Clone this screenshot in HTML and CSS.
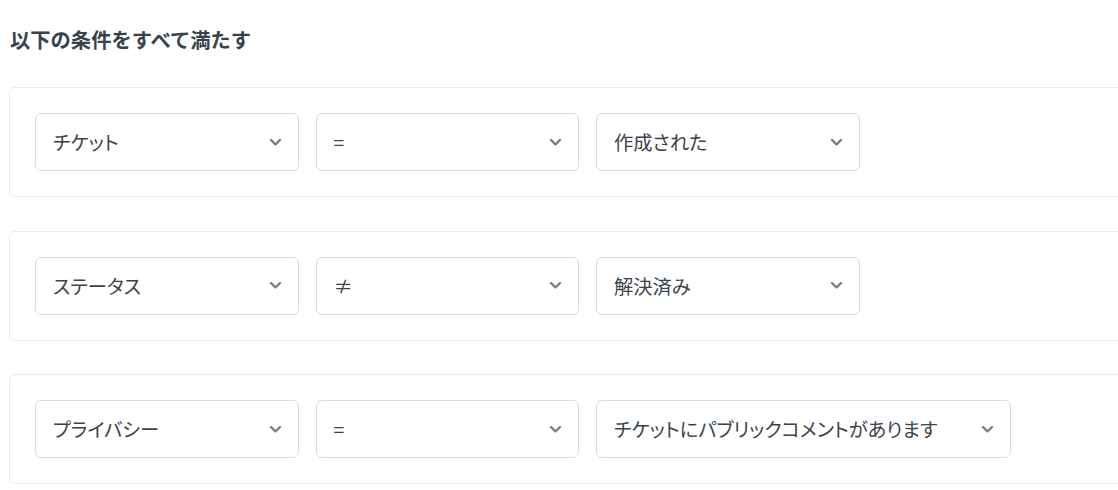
FILE: index.html
```html
<!DOCTYPE html>
<html lang="ja">
<head>
<meta charset="utf-8">
<title>条件</title>
<link rel="stylesheet" href="styles.css">
</head>
<body>
<main class="page">
  <h2 class="title">以下の条件をすべて満たす</h2>
  <section class="card">
    <div class="select"><span class="label">チケット</span><svg class="chev" viewBox="0 0 13 9"><path d="M2 2l4.5 4.5L11 2"/></svg></div>
    <div class="select"><span class="label">=</span><svg class="chev" viewBox="0 0 13 9"><path d="M2 2l4.5 4.5L11 2"/></svg></div>
    <div class="select"><span class="label">作成された</span><svg class="chev" viewBox="0 0 13 9"><path d="M2 2l4.5 4.5L11 2"/></svg></div>
  </section>
  <section class="card">
    <div class="select"><span class="label">ステータス</span><svg class="chev" viewBox="0 0 13 9"><path d="M2 2l4.5 4.5L11 2"/></svg></div>
    <div class="select"><span class="label">≠</span><svg class="chev" viewBox="0 0 13 9"><path d="M2 2l4.5 4.5L11 2"/></svg></div>
    <div class="select"><span class="label">解決済み</span><svg class="chev" viewBox="0 0 13 9"><path d="M2 2l4.5 4.5L11 2"/></svg></div>
  </section>
  <section class="card">
    <div class="select"><span class="label">プライバシー</span><svg class="chev" viewBox="0 0 13 9"><path d="M2 2l4.5 4.5L11 2"/></svg></div>
    <div class="select"><span class="label">=</span><svg class="chev" viewBox="0 0 13 9"><path d="M2 2l4.5 4.5L11 2"/></svg></div>
    <div class="select wide"><span class="label">チケットにパブリックコメントがあります</span><svg class="chev" viewBox="0 0 13 9"><path d="M2 2l4.5 4.5L11 2"/></svg></div>
  </section>
</main>
</body>
</html>
```
FILE: styles.css
```css
html, body {
  margin: 0;
  padding: 0;
  overflow: hidden;
  background: #ffffff;
}
body {
  font-family: "Noto Sans CJK JP", "Noto Sans", sans-serif;
  font-feature-settings: "palt";
  color: #3b444c;
}
.page {
  padding: 25px 0 0 9px;
  display: flex;
  flex-direction: column;
  gap: 33.5px;
}
.title {
  margin: 0 0 0.5px 1px;
  font-size: 20.3px;
  line-height: 28px;
  font-weight: 700;
  font-feature-settings: normal;
  color: #3a434b;
}
.card {
  border: 1px solid #e9ebed;
  border-radius: 6px;
  padding: 25px;
  margin-right: -30px;
  display: flex;
  gap: 17px;
  align-items: center;
}
.select {
  box-sizing: border-box;
  height: 58px;
  width: 263.5px;
  border: 1px solid #d8dcde;
  border-radius: 6px;
  padding: 0 16px 0 17px;
  display: flex;
  align-items: center;
  justify-content: space-between;
  font-size: 19.3px;
  color: #3b444c;
  background: #fff;
}
.select.wide {
  width: auto;
  gap: 43px;
}
.label {
  white-space: nowrap;
}
.chev {
  width: 13px;
  height: 9px;
  flex: none;
  fill: none;
  stroke: #777c82;
  stroke-width: 2.4;
  stroke-linecap: round;
  stroke-linejoin: round;
}
```
